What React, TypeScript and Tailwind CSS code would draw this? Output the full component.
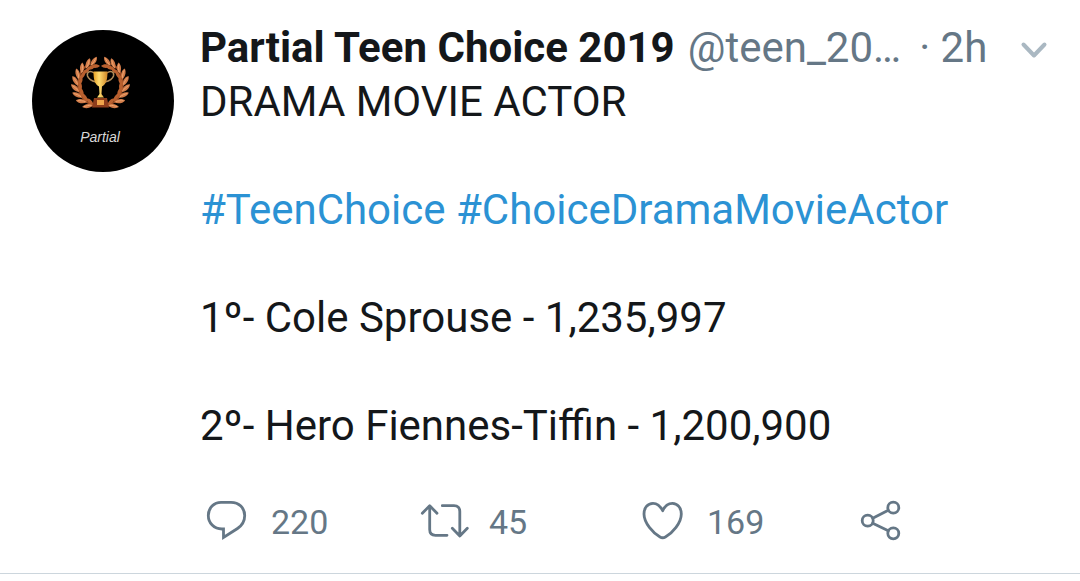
import { ReactNode } from "react";

type ActionProps = {
  label: string;
  count?: number;
  children: ReactNode;
};

// angles run from the foot of the wreath up to the opening at the top
const LEAF_ANGLES = [24, 42, 59, 76, 93, 110, 127, 144, 158];

const WreathSide = () => {
  return (
    <g>
      <path
        d="M64 76C53 74 46 65 46 55C46 46 50 38 58 33"
        fill="none"
        stroke="#9a4a22"
        strokeWidth="1.6"
      />
      {LEAF_ANGLES.map((angle) => {
        const rad = (angle * Math.PI) / 180;
        const x = 68.5 - Math.sin(rad) * 22.5;
        const y = 55 + Math.cos(rad) * 21.5;
        return (
          <g key={angle} transform={`translate(${x} ${y}) rotate(${angle})`}>
            <path d="M2 0C0 4 -3.5 6.500 -7.500 6C-7 2.500 -3 -1 2 0Z" fill="#d07a48" />
            <path d="M2 -0.500C0 -4 -4 -5 -7 -3.800C-5.500 -0.800 -2 0.800 2 -0.500Z" fill="#b9602f" />
            <path d="M0.500 0.500C-2 1.500 -4 3 -6 5" fill="none" stroke="#f0a873" strokeWidth="0.8" />
          </g>
        );
      })}
    </g>
  );
};

const Avatar = () => {
  return (
    <a
      href="#profile"
      aria-label="Partial Teen Choice 2019"
      className="grid size-[142px] shrink-0 overflow-hidden rounded-full bg-black"
    >
      <svg viewBox="0 0 142 142" className="col-start-1 row-start-1 size-full">
        <defs>
          <linearGradient id="gold" x1="0" x2="1" y1="0" y2="0">
            <stop offset="0" stopColor="#e5a024" />
            <stop offset="0.4" stopColor="#ffdc70" />
            <stop offset="1" stopColor="#cf8526" />
          </linearGradient>
        </defs>
        <WreathSide />
        <g transform="translate(137 0) scale(-1 1)">
          <WreathSide />
        </g>
        <path
          d="M62 43C58 40 54.500 42 55.500 46C56.500 49 60 51 64 52M75 43C79 40 82.500 42 81.500 46C80.500 49 77 51 73 52"
          fill="none"
          stroke="#b08a58"
          strokeWidth="1.5"
        />
        <path
          d="M61.500 41.500H75.500C75.500 49 74.500 54 70 56.500L69.500 64L72 67.500H65L67.500 64L67 56.500C62.500 54 61.500 49 61.500 41.500Z"
          fill="url(#gold)"
        />
        <path d="M62 68H75L77 77.500H60Z" fill="#8e3d1c" />
        <path d="M65 70H72V75H65Z" fill="#f0a54c" />
      </svg>
      <span className="col-start-1 row-start-1 mt-[97px] -ml-1.5 text-center font-['Liberation_Sans',sans-serif] text-[14px] leading-[20px] text-[#d8d8d8] italic">
        Partial
      </span>
    </a>
  );
};

const Action = ({ label, count, children }: ActionProps) => {
  return (
    <button
      type="button"
      aria-label={label}
      className="flex cursor-pointer items-start gap-[19px] text-[34px] leading-[54px]"
    >
      <svg
        viewBox="0 0 52 52"
        className="size-[52px] shrink-0"
        fill="none"
        stroke="currentColor"
        strokeWidth="2.8"
        strokeLinecap="round"
        strokeLinejoin="round"
      >
        {children}
      </svg>
      {count !== undefined && <span>{count}</span>}
    </button>
  );
};

const App = () => {
  return (
    <div className="bg-white font-[Roboto,sans-serif] text-[#14171a]">
      <article className="flex gap-[26px] border-b border-[#ccd6dd] pt-[21px] pr-2 pb-6 pl-8">
        <div className="pt-[9px]">
          <Avatar />
        </div>

        <div className="min-w-0 flex-1">
          <header className="mr-5 flex items-center text-[42px] leading-[54px] whitespace-nowrap text-[#657786]">
            <a href="#profile" className="font-bold text-[#14171a]">
              Partial Teen Choice 2019
            </a>
            <a href="#profile" className="ml-[13px] truncate">
              @teen_20…
            </a>
            <p className="ml-[18px]">
              · <time>2h</time>
            </p>
            <button type="button" aria-label="More" className="ml-auto cursor-pointer">
              <svg
                viewBox="0 0 36 36"
                className="size-9"
                fill="none"
                stroke="#aab8c2"
                strokeWidth="4"
                strokeLinecap="round"
                strokeLinejoin="round"
              >
                <path d="M7.500 14.500L18 25.500L28.500 14.500" />
              </svg>
            </button>
          </header>

          <div className="flex flex-col gap-[54px] text-[42px] leading-[54px]">
            <p>DRAMA MOVIE ACTOR</p>
            <p className="text-[#2b92d4]">
              <a href="#TeenChoice">#TeenChoice</a>{" "}
              <a href="#ChoiceDramaMovieActor">#ChoiceDramaMovieActor</a>
            </p>
            <p>1º- Cole Sprouse - 1,235,997</p>
            <p>2º- Hero Fiennes-Tiffin - 1,200,900</p>
          </div>

          <div className="mt-[42px] grid grid-cols-4 text-[#657786]">
            <Action label="Reply" count={220}>
              <path
                d="M21 7.300H31C39 7.300 44.700 13 44.700 20.500C44.700 26 42 30.500 37.500 33.500L23.500 42.500V34H22C14 34 8.300 28 8.300 20.500C8.300 13 14 7.300 21 7.300Z"
                strokeLinejoin="miter"
              />
            </Action>
            <Action label="Retweet" count={45}>
              <path d="M4.300 18.300L11.700 10.700L19 18.300M11.700 11V34.500Q11.700 40.300 17.500 40.300H29" />
              <path d="M34.300 33.300L41.800 41L49.300 33.300M41.800 40.500V16.500Q41.800 10.700 36 10.700H24.300" />
            </Action>
            <Action label="Like" count={169}>
              <path d="M26.700 15.700C24 10.500 20.500 8.300 17 8.300C11.500 8.300 8 13 8 19C8 28 17 38 24 42Q26.700 43.500 29.400 42C36.500 38 45.300 28 45.300 19C45.300 13 41.500 8.300 36.500 8.300C32.500 8.300 29 10.500 26.700 15.700Z" />
            </Action>
            <Action label="Share">
              <circle cx="13.700" cy="25.700" r="5.500" />
              <circle cx="39.300" cy="12.700" r="5.500" />
              <circle cx="39.300" cy="38.300" r="5.500" />
              <path d="M18.700 23.200L34.300 15.300M18.700 28.200L34.300 35.800" />
            </Action>
          </div>
        </div>
      </article>
    </div>
  );
};

export default App;
